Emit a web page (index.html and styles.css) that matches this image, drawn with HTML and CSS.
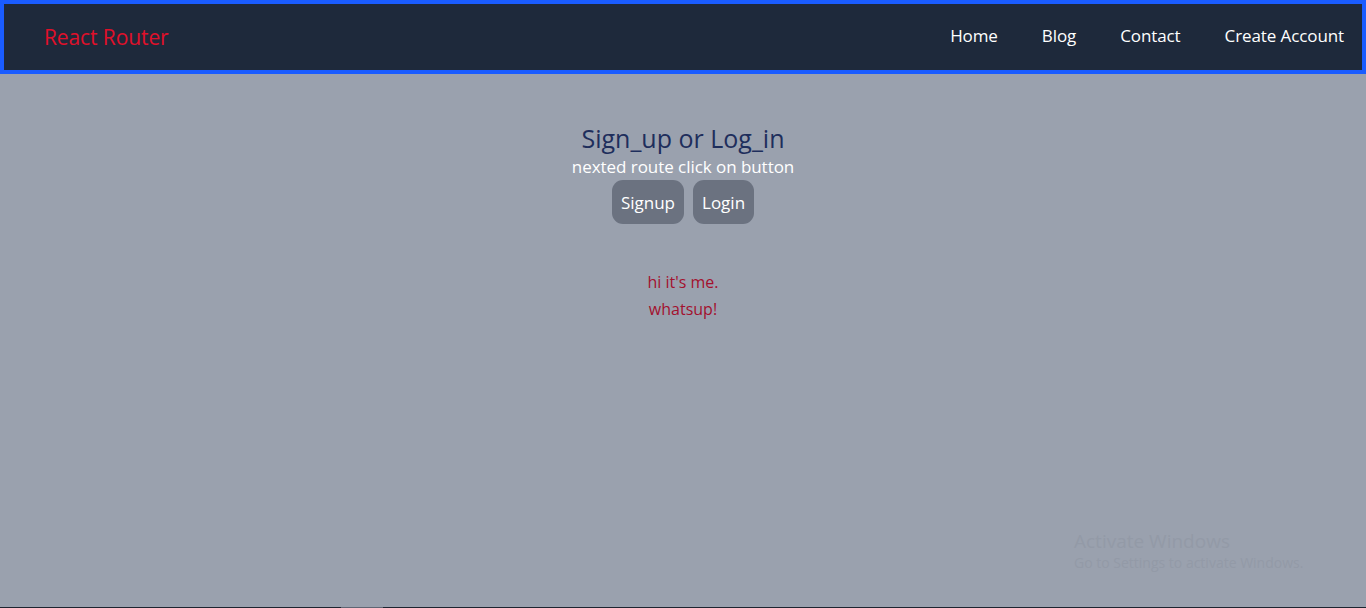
FILE: index.html
```html
<!DOCTYPE html>
<html>
<head>
<meta charset="utf-8">
<link rel="stylesheet" href="styles.css">
</head>
<body>
<div class="page">
  <header class="navbar">
    <div class="brand">React Router</div>
    <nav class="links">
      <a class="link">Home</a>
      <a class="link">Blog</a>
      <a class="link">Contact</a>
      <a class="link">Create Account</a>
    </nav>
  </header>
  <main class="main">
    <h1 class="title">Sign_up or Log_in</h1>
    <p class="sub">nexted route click on button</p>
    <div class="buttons">
      <button class="btn">Signup</button>
      <button class="btn">Login</button>
    </div>
    <div class="msg">
      <p>hi it's me.</p>
      <p>whatsup!</p>
    </div>
  </main>
  <div class="taskbar"><span class="tb-a"></span><span class="tb-b"></span></div>
  <div class="watermark">
    <div class="wm-title">Activate Windows</div>
    <div class="wm-sub">Go to Settings to activate Windows.</div>
  </div>
</div>
</body>
</html>
```
FILE: styles.css
```css
* { box-sizing: border-box; }
html, body { margin: 0; padding: 0; }
body {
  font-family: "Open Sans", "Noto Sans", sans-serif;
  background: #9aa1ae;
  height: 608px;
  overflow: hidden;
}
.page {
  position: relative;
  display: flex;
  flex-direction: column;
  height: 608px;
}
.navbar {
  height: 74px;
  background: #1e293b;
  border: 4px solid #1a5cff;
  display: flex;
  align-items: center;
  justify-content: space-between;
  padding: 0 18px 0 40px;
}
.brand {
  color: #e0102a;
  font-size: 21px;
  letter-spacing: -0.1px;
}
.links { display: flex; gap: 44px; margin-top: -4px; }
.link {
  color: #ffffff;
  font-size: 17px;
  letter-spacing: -0.1px;
}
.main {
  flex: 1;
  display: flex;
  flex-direction: column;
  align-items: center;
  padding-top: 47px;
}
.title {
  margin: 0;
  font-weight: 400;
  font-size: 25px;
  line-height: 34px;
  color: #1e2e5c;
  letter-spacing: 0;
}
.sub {
  margin: 0;
  font-size: 17px;
  line-height: 24px;
  color: #ffffff;
  letter-spacing: -0.05px;
}
.buttons { display: flex; gap: 9px; margin-top: 1px; }
.btn {
  font-family: inherit;
  font-size: 17px;
  letter-spacing: 0;
  color: #ffffff;
  background: #6b7280;
  border: none;
  border-radius: 11px;
  height: 44px;
  padding: 0 9px;
}
.msg { margin-top: 45px; text-align: center; }
.msg p {
  margin: 0;
  font-size: 16px;
  line-height: 27px;
  color: #a3112e;
  letter-spacing: 0;
}
.taskbar {
  height: 1px;
  background: #1e2430;
  display: flex;
}
.tb-a { width: 341px; }
.tb-b { width: 42px; background: #5f6573; }
.watermark {
  position: absolute;
  left: 1074px;
  top: 529px;
  color: #939aa7;
}
.wm-title { font-size: 19px; line-height: 24px; }
.wm-sub { font-size: 14px; line-height: 20px; }
```
